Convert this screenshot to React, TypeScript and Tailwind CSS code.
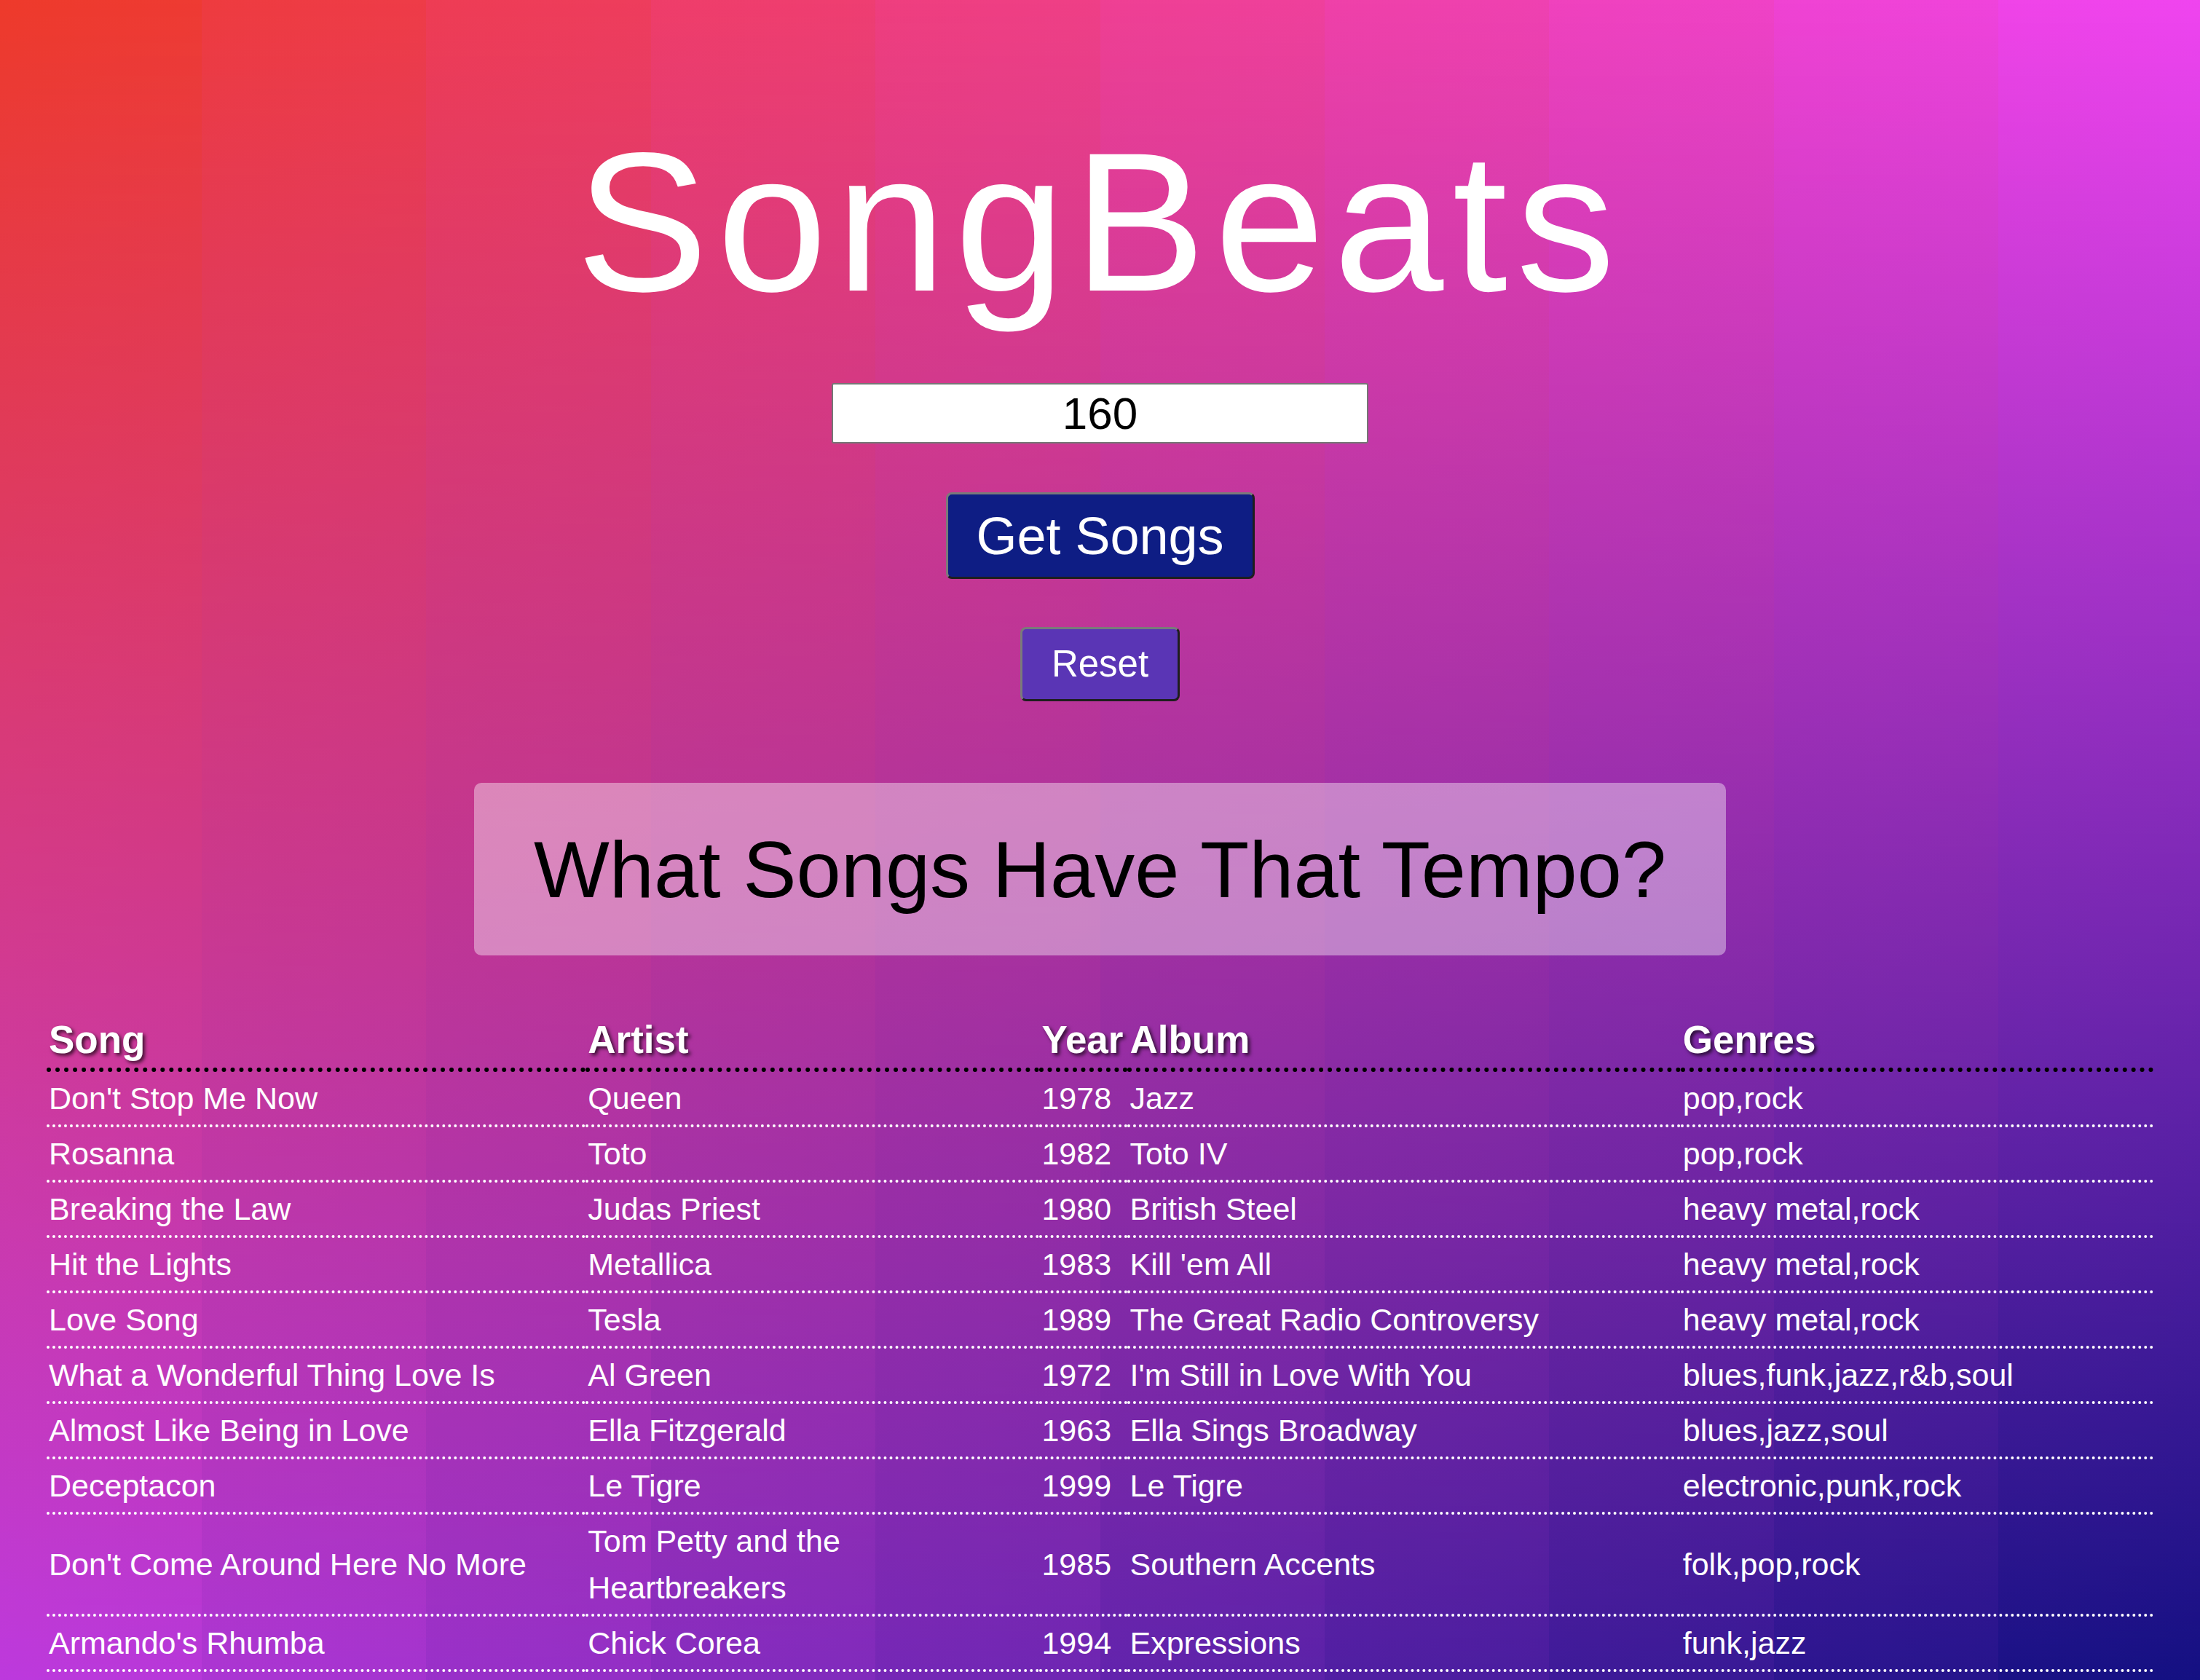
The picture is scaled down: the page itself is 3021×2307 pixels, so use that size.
import React from 'react'

const songs = [
  { song: "Don't Stop Me Now", artist: 'Queen', year: '1978', album: 'Jazz', genres: 'pop,rock' },
  { song: 'Rosanna', artist: 'Toto', year: '1982', album: 'Toto IV', genres: 'pop,rock' },
  { song: 'Breaking the Law', artist: 'Judas Priest', year: '1980', album: 'British Steel', genres: 'heavy metal,rock' },
  { song: 'Hit the Lights', artist: 'Metallica', year: '1983', album: "Kill 'em All", genres: 'heavy metal,rock' },
  { song: 'Love Song', artist: 'Tesla', year: '1989', album: 'The Great Radio Controversy', genres: 'heavy metal,rock' },
  { song: 'What a Wonderful Thing Love Is', artist: 'Al Green', year: '1972', album: "I'm Still in Love With You", genres: 'blues,funk,jazz,r&b,soul' },
  { song: 'Almost Like Being in Love', artist: 'Ella Fitzgerald', year: '1963', album: 'Ella Sings Broadway', genres: 'blues,jazz,soul' },
  { song: 'Deceptacon', artist: 'Le Tigre', year: '1999', album: 'Le Tigre', genres: 'electronic,punk,rock' },
  { song: "Don't Come Around Here No More", artist: 'Tom Petty and the Heartbreakers', year: '1985', album: 'Southern Accents', genres: 'folk,pop,rock' },
  { song: "Armando's Rhumba", artist: 'Chick Corea', year: '1994', album: 'Expressions', genres: 'funk,jazz' },
]

// corner colours of the page background
const TL = [238, 58, 38]
const TR = [240, 69, 245]
const BL = [194, 59, 224]
const BR = [15, 15, 128]

const mix = (a: number[], b: number[], t: number) =>
  `rgb(${a.map((v, i) => Math.round(v + (b[i] - v) * t)).join(',')})`

const stripeWidths = [277, 308.4, 308.4, 308.4, 308.4, 308.4, 308.4, 308.4, 308.4, 277]

function Stripes() {
  let x = 0
  return (
    <div className="absolute inset-0 flex" aria-hidden>
      {stripeWidths.map((w, i) => {
        const t = (x + w / 2) / 3021
        x += w
        return (
          <div
            key={i}
            className="h-full shrink-0"
            style={{ width: w, backgroundImage: `linear-gradient(to bottom, ${mix(TL, TR, t)}, ${mix(BL, BR, t)})` }}
          />
        )
      })}
    </div>
  )
}

const th = 'pl-[3px] pt-1 text-left font-bold text-[53px] leading-[76px] border-b-[6px] border-dotted border-black [text-shadow:3px_3px_5px_rgba(0,0,0,0.7)]'
const td = 'pl-[3px] py-1 text-left align-middle text-[43px] leading-[64px] border-b-[4px] border-dotted border-white'

export default function App() {
  return (
    <div className="relative min-h-screen overflow-hidden text-white font-['Liberation_Sans',Arial,sans-serif]">
      <Stripes />
      <div className="absolute inset-0 opacity-40 bg-[linear-gradient(to_right,#ee3a26,#f045f5)]" aria-hidden>
        <div className="h-full bg-[linear-gradient(to_right,#c23be0,#0f0f80)] [mask-image:linear-gradient(to_bottom,transparent,black)]" />
      </div>

      <main className="relative flex flex-col items-center pt-[169px] pb-3">
        <h1 className="text-[272px] leading-[272px] font-normal tracking-[12px]">SongBeats</h1>

        <input
          type="text"
          defaultValue="160"
          className="mt-[85px] h-[83px] w-[737px] rounded-[3px] border-2 border-[#767676] bg-white text-center text-[62px] text-black outline-none"
        />

        <button className="mt-[67px] h-[119px] w-[424px] rounded-[8px] border-[3px] border-t-[#7a7a7a] border-l-[#7a7a7a] border-b-[#1e1e1e] border-r-[#1e1e1e] bg-[#0e1d84] text-[72px] text-white">
          Get Songs
        </button>

        <button className="mt-[66px] h-[102px] w-[219px] rounded-[8px] border-[3px] border-t-[#7a7a7a] border-l-[#7a7a7a] border-b-[#1e1e1e] border-r-[#1e1e1e] bg-[#5a35b5] text-[51px] text-white">
          Reset
        </button>

        <div className="mt-[112px] flex h-[237px] w-[1719px] items-center justify-center rounded-[10px] bg-white/40">
          <h2 className="text-[110px] leading-none text-black">What Songs Have That Tempo?</h2>
        </div>

        <div className="mt-[74px] w-full px-[64px]">
          <table className="w-full table-fixed">
            <colgroup>
              <col className="w-[740px]" />
              <col className="w-[623px]" />
              <col className="w-[121px]" />
              <col className="w-[759px]" />
              <col className="w-[649px]" />
            </colgroup>
            <thead>
              <tr>
                <th className={th}>Song</th>
                <th className={th}>Artist</th>
                <th className={th}>Year</th>
                <th className={th}>Album</th>
                <th className={th}>Genres</th>
              </tr>
            </thead>
            <tbody>
              {songs.map((s) => (
                <tr key={s.song}>
                  <td className={td}>{s.song}</td>
                  <td className={td}>{s.artist}</td>
                  <td className={td}>{s.year}</td>
                  <td className={td}>{s.album}</td>
                  <td className={td}>{s.genres}</td>
                </tr>
              ))}
            </tbody>
          </table>
        </div>
      </main>
    </div>
  )
}
